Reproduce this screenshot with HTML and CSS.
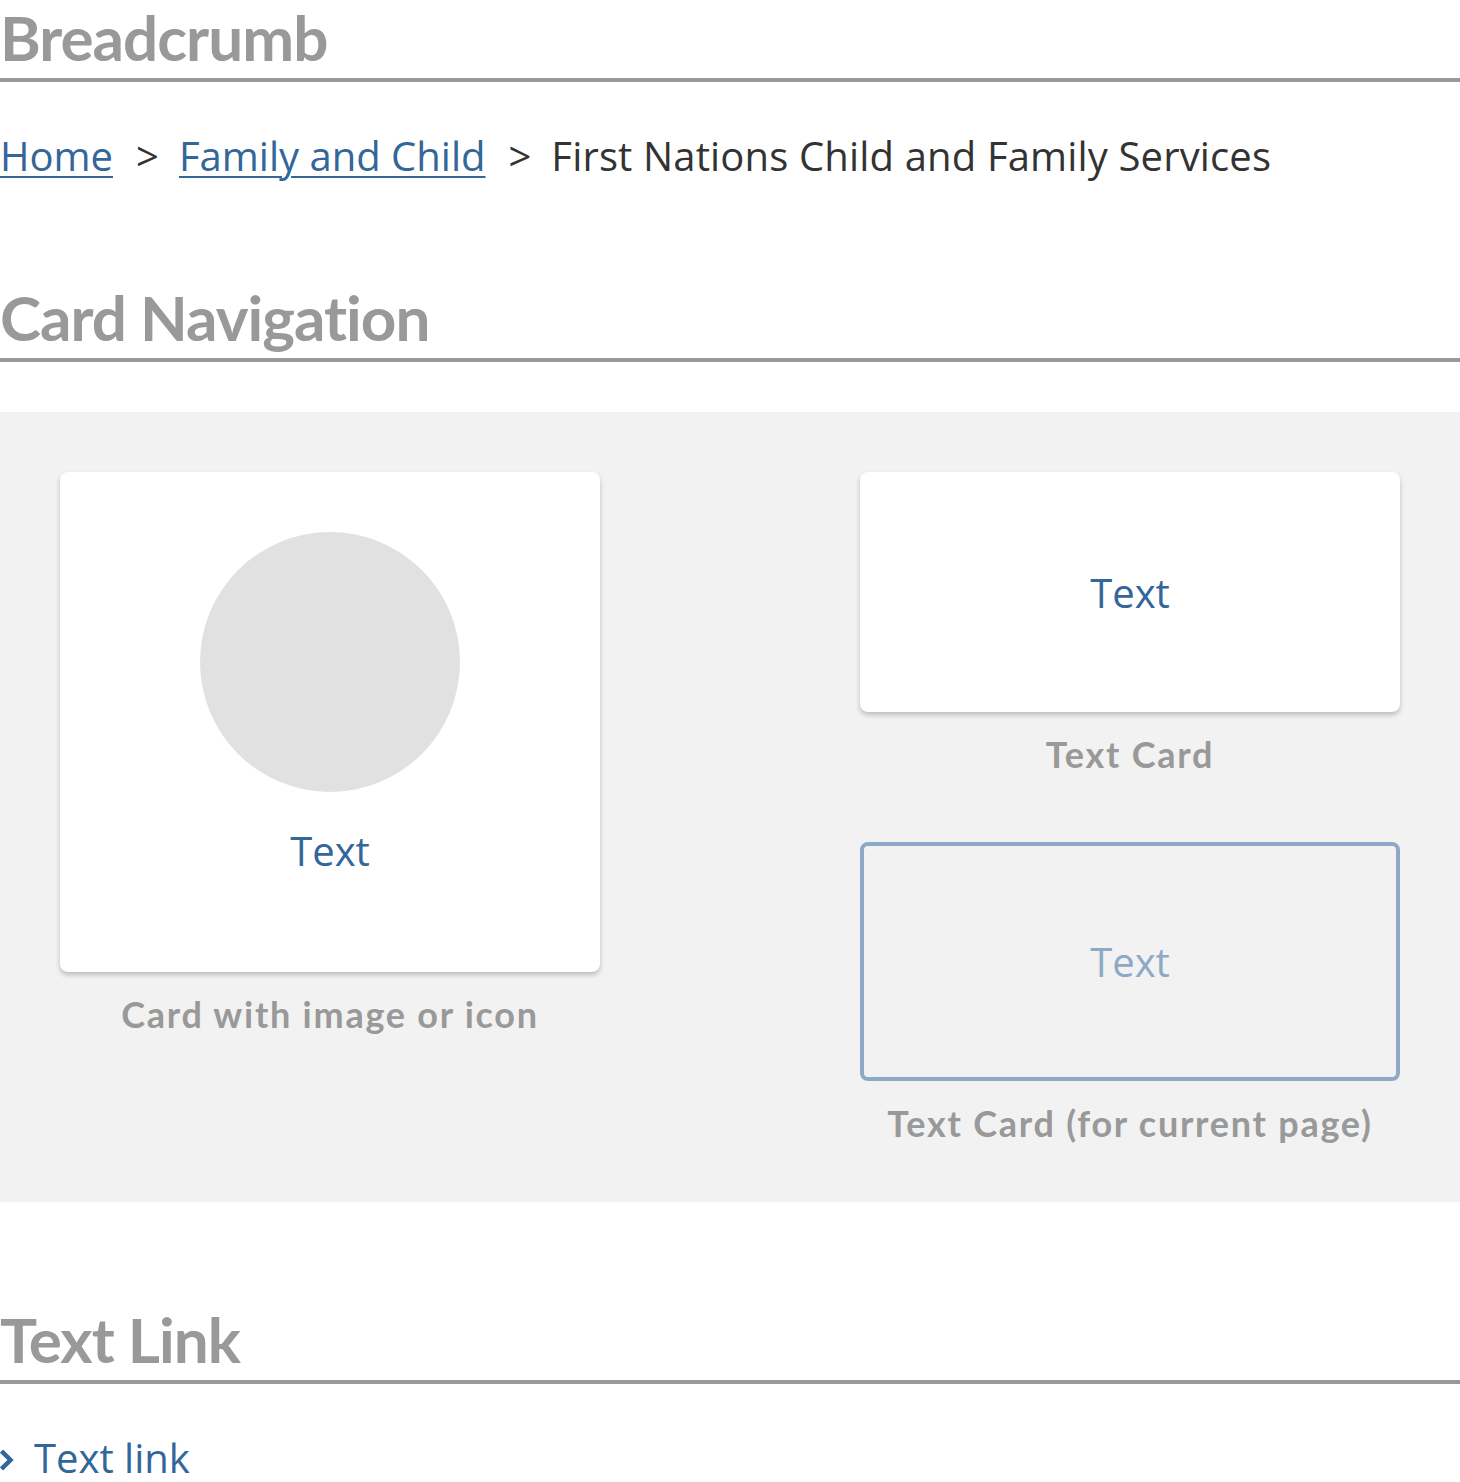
FILE: index.html
```html
<!DOCTYPE html>
<html lang="en">
<head>
<meta charset="utf-8">
<title>Components</title>
<link rel="stylesheet" href="styles.css">
</head>
<body>
<section class="block">
  <h2 class="section-title">Breadcrumb</h2>
  <nav class="breadcrumb">
    <a href="#" class="crumb-link">Home</a><span class="crumb-sep">&gt;</span><a href="#" class="crumb-link">Family and Child</a><span class="crumb-sep">&gt;</span><span class="crumb-current">First Nations Child and Family Services</span>
  </nav>
</section>

<section class="block block-cards">
  <h2 class="section-title">Card Navigation</h2>
  <div class="card-area">
    <div class="card-col">
      <a href="#" class="card card-image">
        <span class="card-circle"></span>
        <span class="card-text">Text</span>
      </a>
      <p class="card-caption">Card with image or icon</p>
    </div>
    <div class="card-col">
      <a href="#" class="card card-plain">
        <span class="card-text">Text</span>
      </a>
      <p class="card-caption">Text Card</p>
      <div class="card card-current">
        <span class="card-text">Text</span>
      </div>
      <p class="card-caption">Text Card (for current page)</p>
    </div>
  </div>
</section>

<section class="block block-links">
  <h2 class="section-title">Text Link</h2>
  <a href="#" class="text-link">
    <svg class="chevron" width="14" height="24" viewBox="0 0 14 24" aria-hidden="true"><path d="M1.5 3 L10.5 12 L1.5 21" fill="none" stroke="#336699" stroke-width="4.5"/></svg>
    <span>Text link</span>
  </a>
</section>
</body>
</html>
```

FILE: styles.css
```css
html, body {
  margin: 0;
  padding: 0;
  background: #ffffff;
}

body {
  width: 1460px;
  font-family: "Open Sans", "Liberation Sans", sans-serif;
  color: #333333;
}

.section-title {
  margin: 0;
  font-family: Lato, "Open Sans", sans-serif;
  font-weight: 700;
  font-size: 62px;
  letter-spacing: -1px;
  line-height: 74px;
  color: #999999;
  padding-bottom: 4px;
  border-bottom: 4px solid #999999;
}

.breadcrumb {
  margin-top: 46px;
  font-size: 40px;
  display: flex;
  align-items: baseline;
  white-space: nowrap;
}

.crumb-link {
  color: #336699;
  text-decoration: underline;
  text-decoration-thickness: 2px;
  text-underline-offset: 5px;
}

.crumb-sep {
  color: #333333;
  margin: 0 20px 0 23px;
}

.crumb-current {
  color: #333333;
  letter-spacing: 0.15px;
}

.block-cards {
  margin-top: 97px;
}

.card-area {
  margin-top: 50px;
  background: #f2f2f2;
  padding: 60px 60px 57px;
  display: grid;
  grid-template-columns: 540px 540px;
  column-gap: 260px;
  align-items: start;
}

.card-col {
  display: flex;
  flex-direction: column;
}

.card {
  box-sizing: border-box;
  width: 540px;
  border-radius: 8px;
  display: flex;
  flex-direction: column;
  align-items: center;
  text-decoration: none;
}

.card-image {
  height: 500px;
  background: #ffffff;
  box-shadow: 0 3px 5px rgba(0, 0, 0, 0.22);
  padding-top: 60px;
}

.card-circle {
  width: 260px;
  height: 260px;
  border-radius: 50%;
  background: #e1e1e1;
  margin-bottom: 31px;
}

.card-plain {
  height: 240px;
  background: #ffffff;
  box-shadow: 0 3px 5px rgba(0, 0, 0, 0.22);
  justify-content: center;
}

.card-current {
  height: 239px;
  margin-top: 66px;
  border: 4px solid #8ea9c5;
  justify-content: center;
}

.card-text {
  font-size: 40px;
  color: #336699;
}

.card-current .card-text {
  color: #8ea9c5;
}

.card-caption {
  margin: 20px 0 0;
  font-family: Lato, "Open Sans", sans-serif;
  font-weight: 700;
  font-size: 36px;
  letter-spacing: 1.75px;
  color: #999999;
  text-align: center;
}

.block-links {
  margin-top: 100px;
}

.text-link {
  margin-top: 46px;
  display: flex;
  align-items: center;
  gap: 20px;
  font-size: 40px;
  color: #336699;
  text-decoration: none;
}

.chevron {
  flex: none;
  margin-top: 4px;
}
```
